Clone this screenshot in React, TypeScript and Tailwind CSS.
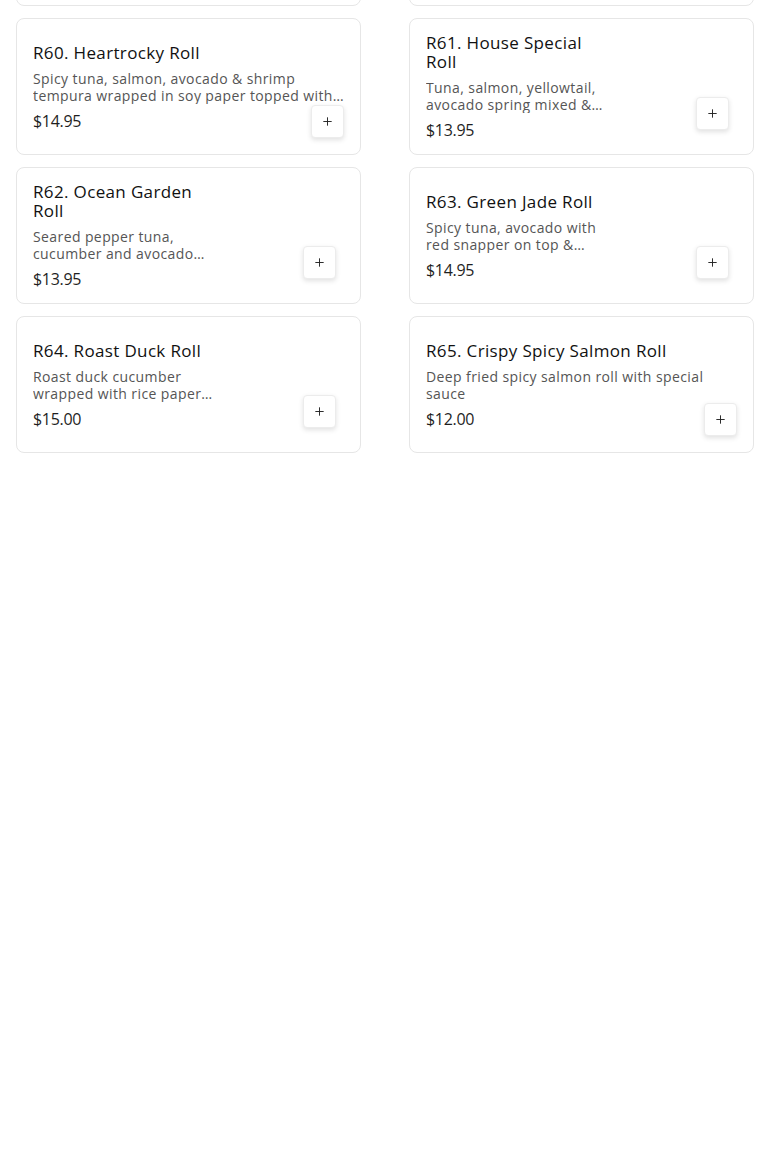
import React from 'react';
import { Plus } from 'lucide-react';

type Item = {
  code: string;
  name: string;
  description: string;
  price: string;
  image?: boolean;
};

const items: Item[] = [
  {
    code: 'R60',
    name: 'Heartrocky Roll',
    description: 'Spicy tuna, salmon, avocado & shrimp tempura wrapped in soy paper topped with eel sauce and crunch',
    price: '$14.95',
  },
  {
    code: 'R61',
    name: 'House Special Roll',
    description: 'Tuna, salmon, yellowtail, avocado spring mixed & special sauce',
    price: '$13.95',
    image: true,
  },
  {
    code: 'R62',
    name: 'Ocean Garden Roll',
    description: 'Seared pepper tuna, cucumber and avocado topped with ponzu sauce',
    price: '$13.95',
    image: true,
  },
  {
    code: 'R63',
    name: 'Green Jade Roll',
    description: 'Spicy tuna, avocado with red snapper on top & special sauce',
    price: '$14.95',
    image: true,
  },
  {
    code: 'R64',
    name: 'Roast Duck Roll',
    description: 'Roast duck cucumber wrapped with rice paper hoisin-sauce',
    price: '$15.00',
    image: true,
  },
  {
    code: 'R65',
    name: 'Crispy Spicy Salmon Roll',
    description: 'Deep fried spicy salmon roll with special sauce',
    price: '$12.00',
  },
];

function AddButton() {
  return (
    <button className="w-[33px] h-[33px] flex items-center justify-center bg-white rounded border border-[#ececec] shadow-[0_2px_5px_rgba(0,0,0,0.12)] text-[#222]">
      <Plus size={13} strokeWidth={1.75} />
    </button>
  );
}

function MenuCard({ item }: { item: Item }) {
  return (
    <div className="relative h-[137px] bg-white border border-[#e6e6e6] rounded-lg p-4 flex gap-4">
      <div className={`flex flex-col justify-center min-w-0 ${item.image ? 'w-[182px]' : 'flex-1'}`}>
        <h3 className="shrink-0 text-[17px] leading-[19px] font-medium tracking-[0.35px] text-[#111]">
          {item.code}. {item.name}
        </h3>
        <p className="shrink-0 mt-[8px] text-[14px] leading-[17px] tracking-[0.4px] text-[#555] line-clamp-2">
          {item.description}
        </p>
        <p className="shrink-0 mt-[7px] text-[16px] leading-[20px] tracking-[-0.3px] text-[#1f1f1f]">{item.price}</p>
      </div>
      {item.image ? (
        <div className="relative ml-auto w-[104px] h-full">
          <div className="absolute right-[8px] bottom-2">
            <AddButton />
          </div>
        </div>
      ) : (
        <div className="absolute right-4 bottom-4">
          <AddButton />
        </div>
      )}
    </div>
  );
}

export default function App() {
  return (
    <div className="min-h-screen bg-white overflow-hidden" style={{ fontFamily: '"Open Sans", "Liberation Sans", sans-serif' }}>
      <div className="grid grid-cols-2 gap-x-12 gap-y-3 px-4 -mt-[131px]">
        <div className="h-[137px] bg-white border border-[#e6e6e6] rounded-lg" />
        <div className="h-[137px] bg-white border border-[#e6e6e6] rounded-lg" />
        {items.map((item) => (
          <MenuCard key={item.code} item={item} />
        ))}
      </div>
    </div>
  );
}
